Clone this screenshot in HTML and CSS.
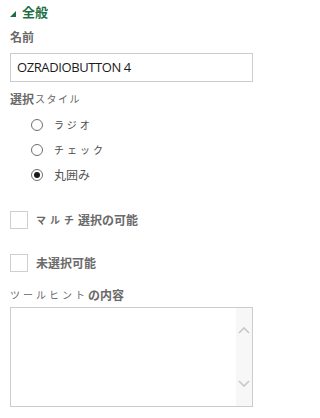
FILE: index.html
```html
<!DOCTYPE html>
<html lang="ja">
<head>
<meta charset="utf-8">
<link rel="stylesheet" href="styles.css">
</head>
<body>
<div class="panel">
  <div class="section-head">
    <svg class="tri" width="6" height="6" viewBox="0 0 6 6"><polygon points="6,0 6,6 0,6" fill="#1e6e43"/></svg>
    <span class="section-title">全般</span>
  </div>
  <div class="label label-name">名前</div>
  <div class="textbox">OZRADIOBUTTON 4</div>
  <div class="label label-style">選択<span class="kana">スタイル</span></div>
  <div class="radios">
    <div class="radio-row"><span class="radio"></span><span class="radio-text kana">ラジオ</span></div>
    <div class="radio-row"><span class="radio"></span><span class="radio-text kana">チェック</span></div>
    <div class="radio-row"><span class="radio checked"></span><span class="radio-text">丸囲み</span></div>
  </div>
  <div class="check-row check-first"><span class="checkbox"></span><span class="check-text"><span class="kana">マルチ</span>選択の可能</span></div>
  <div class="check-row check-second"><span class="checkbox"></span><span class="check-text">未選択可能</span></div>
  <div class="label label-tip"><span class="kana">ツールヒント</span>の内容</div>
  <div class="textarea">
    <div class="scroll">
      <svg width="12" height="8" viewBox="0 0 12 8"><polyline points="1,7 6,2 11,7" fill="none" stroke="#c8c8c8" stroke-width="1.6"/></svg>
      <svg width="12" height="8" viewBox="0 0 12 8"><polyline points="1,1 6,6 11,1" fill="none" stroke="#c8c8c8" stroke-width="1.6"/></svg>
    </div>
  </div>
</div>
</body>
</html>
```
FILE: styles.css
```css
html, body {
  margin: 0;
  padding: 0;
  background: #ffffff;
}
body {
  font-family: "Noto Sans CJK JP", "Noto Sans", sans-serif;
  color: #666666;
}
.panel {
  width: 261px;
  padding: 0 0 0 10px;
  box-sizing: border-box;
}
.section-head {
  display: flex;
  align-items: center;
  height: 24px;
}
.tri {
  margin-top: 3px;
}
.section-title {
  margin-left: 6px;
  font-size: 13px;
  font-weight: bold;
  color: #1e6e43;
  line-height: 18px;
  height: 18px;
}
.label {
  height: 16px;
  font-size: 12px;
  font-weight: bold;
  color: #6a6a6a;
  line-height: 16px;
  white-space: nowrap;
}
.label .kana {
  font-size: 10px;
  line-height: 16px;
  font-weight: normal;
  letter-spacing: 1.5px;
  margin-left: 1px;
  vertical-align: top;
}
.label-name {
  margin-top: 5px;
}
.textbox {
  margin-top: 8px;
  width: 243px;
  height: 29px;
  box-sizing: border-box;
  border: 1px solid #cccccc;
  font-family: "Open Sans", "Liberation Sans", sans-serif;
  font-size: 13px;
  color: #1a1a1a;
  line-height: 27px;
  padding-left: 6px;
  letter-spacing: -0.4px;
}
.label-style {
  margin-top: 9px;
}
.radios {
  margin-top: 5px;
}
.radio-row {
  display: flex;
  align-items: center;
  height: 25px;
  padding-left: 21px;
}
.radio {
  width: 12px;
  height: 12px;
  border: 1px solid #6e6e6e;
  border-radius: 50%;
  box-sizing: border-box;
  position: relative;
  background: #fff;
}
.radio.checked::after {
  content: "";
  position: absolute;
  left: 2px;
  top: 2px;
  width: 6px;
  height: 6px;
  border-radius: 50%;
  background: #1a1a1a;
}
.radio-text {
  margin-left: 11px;
  font-size: 12px;
  line-height: 16px;
  color: #555555;
}
.radio-text.kana {
  font-size: 10px;
  letter-spacing: 3px;
  color: #4a4a4a;
}
.check-row {
  display: flex;
  align-items: center;
  height: 18px;
}
.check-first {
  margin-top: 24px;
}
.check-second {
  margin-top: 25px;
}
.checkbox {
  width: 18px;
  height: 18px;
  box-sizing: border-box;
  border: 1px solid #cfcfcf;
  background: #fff;
}
.check-text {
  margin-left: 8px;
  font-size: 12px;
  line-height: 16px;
  font-weight: bold;
  color: #6a6a6a;
  white-space: nowrap;
}
.check-text .kana {
  font-size: 10px;
  letter-spacing: 4px;
  vertical-align: top;
}
.label-tip {
  margin-top: 15px;
}
.label-tip .kana {
  letter-spacing: 3px;
  margin-left: 0;
}
.textarea {
  margin-top: 4px;
  width: 243px;
  height: 100px;
  box-sizing: border-box;
  border: 1px solid #cccccc;
  display: flex;
  justify-content: flex-end;
}
.scroll {
  width: 16px;
  height: 100%;
  background: #f7f7f7;
  display: flex;
  flex-direction: column;
  align-items: center;
  justify-content: space-between;
  padding: 18px 0 18px;
  box-sizing: border-box;
}
```
